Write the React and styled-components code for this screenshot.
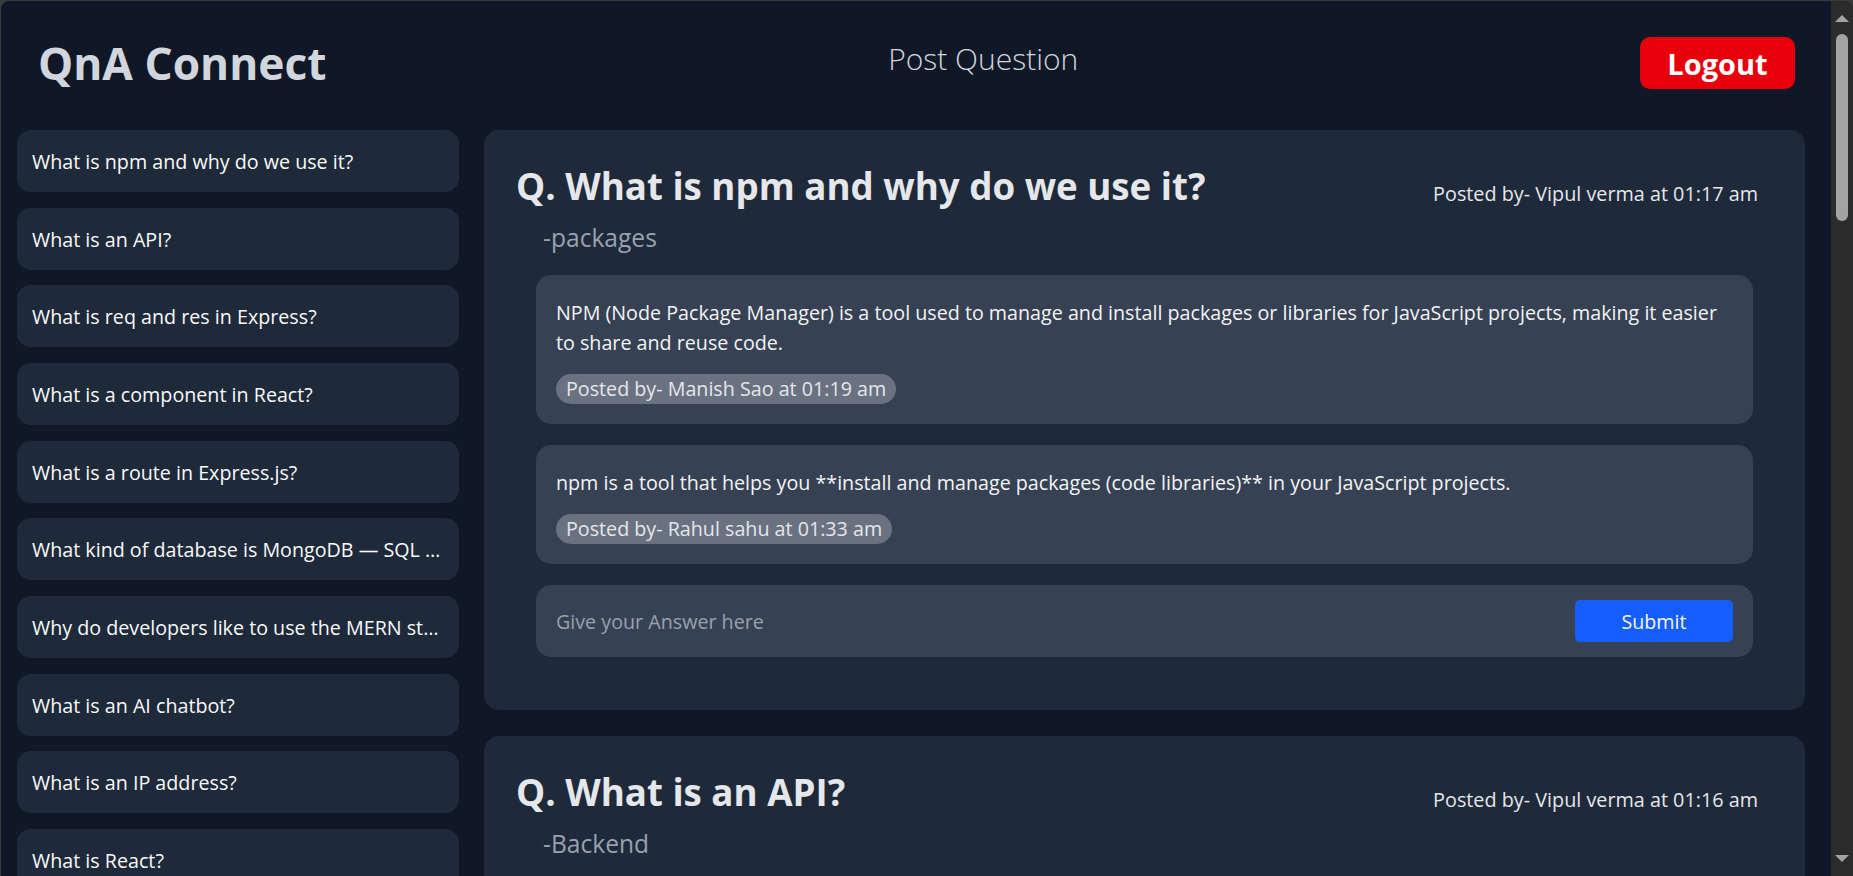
import React from "react";
import styled, { createGlobalStyle } from "styled-components";

const GlobalStyle = createGlobalStyle`
  html, body {
    margin: 0;
    padding: 0;
    height: 100%;
    overflow: hidden;
    background: #3b3b3b;
  }
  #root { height: 100%; }
  *, *::before, *::after { box-sizing: border-box; }
`;

const Frame = styled.div`
  height: calc(100vh - 1px);
  margin: 1px 0 0 1px;
  border-top-left-radius: 8px;
  border-top-right-radius: 8px;
  overflow: hidden;
  display: flex;
  background: #101828;
  font-family: "Open Sans", "Noto Sans", sans-serif;
`;

const Viewport = styled.div`
  flex: 1;
  min-width: 0;
  height: 100%;
  overflow-y: auto;
  scrollbar-width: none;
  &::-webkit-scrollbar {
    display: none;
  }
`;

const ScrollTrack = styled.div`
  width: 22px;
  flex-shrink: 0;
  height: 100%;
  background: #2c2c2c;
  display: flex;
  flex-direction: column;
  align-items: center;
`;

const ScrollArrow = styled.div`
  height: 29px;
  width: 100%;
  display: flex;
  justify-content: center;
  align-items: ${(p) => (p.$down ? "flex-end" : "flex-start")};
  padding: ${(p) => (p.$down ? "0 0 14px" : "14px 0 0")};
  margin-top: ${(p) => (p.$down ? "auto" : "0")};
  &::before {
    content: "";
    width: 0;
    height: 0;
    border-left: 7px solid transparent;
    border-right: 7px solid transparent;
    ${(p) =>
      p.$down
        ? "border-top: 7px solid #a3a3a3;"
        : "border-bottom: 7px solid #a3a3a3;"}
  }
`;

const ScrollThumb = styled.div`
  width: 12px;
  height: 187px;
  margin-top: 4px;
  border-radius: 6px;
  background: #a3a3a3;
`;

const Header = styled.header`
  height: 129px;
  display: flex;
  align-items: center;
  justify-content: space-between;
  padding: 0 36px 5px 37px;
`;

const Logo = styled.h1`
  margin: 0;
  font-size: 44.3px;
  font-weight: 700;
  color: #d1d5dc;
  line-height: 52px;
`;

const NavLink = styled.a`
  font-size: 30px;
  font-weight: 300;
  color: #d1d5dc;
  text-decoration: none;
  line-height: 40px;
  margin-top: -8px;
  cursor: pointer;
`;

const LogoutButton = styled.button`
  width: 155px;
  height: 52px;
  border: none;
  border-radius: 10px;
  background: #e7000b;
  color: #ffffff;
  font-family: inherit;
  font-size: 29px;
  font-weight: 700;
  cursor: pointer;
`;

const Body = styled.div`
  display: flex;
  align-items: flex-start;
  gap: 25px;
  padding: 0 26px 26px 16px;
`;

const Sidebar = styled.aside`
  width: 442px;
  flex-shrink: 0;
  display: flex;
  flex-direction: column;
  gap: 15.67px;
`;

const SideItem = styled.div`
  height: 62px;
  padding: 17px 15px 15px;
  background: #1e2939;
  border-radius: 14px;
  color: #f9fafb;
  font-size: 19.7px;
  line-height: 30px;
  white-space: nowrap;
  overflow: hidden;
  text-overflow: ellipsis;
  cursor: pointer;
`;

const Feed = styled.main`
  flex: 1;
  min-width: 0;
  display: flex;
  flex-direction: column;
  gap: 26px;
`;

const Card = styled.article`
  background: #1e2939;
  border-radius: 15px;
  padding: 33.5px 30px 53px 32px;
`;

const QuestionHead = styled.div`
  display: flex;
  align-items: baseline;
  justify-content: space-between;
  padding-right: 17px;
`;

const QuestionTitle = styled.h2`
  margin: 0;
  font-size: 36.7px;
  line-height: 45px;
  font-weight: 700;
  color: #e5e7eb;
`;

const PostedBy = styled.span`
  font-size: 19.8px;
  line-height: 30px;
  color: #e5e7eb;
  white-space: nowrap;
  position: relative;
  top: 1px;
`;

const Tag = styled.div`
  margin-top: 11.5px;
  padding-left: 27px;
  font-size: 24.6px;
  line-height: 35px;
  color: #99a1af;
`;

const Answers = styled.div`
  margin: 20px 22px 0 20px;
  display: flex;
  flex-direction: column;
  gap: 21px;
`;

const AnswerBox = styled.div`
  background: #364153;
  border-radius: 15px;
  padding: 22.5px 20px 20px;
`;

const AnswerText = styled.p`
  margin: 0;
  font-size: 19.7px;
  line-height: 30px;
  color: #f3f4f6;
`;

const Badge = styled.span`
  display: inline-block;
  margin-top: 16.5px;
  padding: 0 10px;
  background: #6a7282;
  border-radius: 15px;
  font-size: 19.7px;
  line-height: 30px;
  color: #e5e7eb;
`;

const AnswerForm = styled.form`
  display: flex;
  align-items: center;
  gap: 16px;
  background: #364153;
  border-radius: 15px;
  padding: 15px 20px;
`;

const AnswerInput = styled.input`
  flex: 1;
  min-width: 0;
  border: none;
  outline: none;
  background: transparent;
  padding: 1px 0 0;
  font-family: inherit;
  font-size: 19.7px;
  line-height: 30px;
  color: #f3f4f6;
  &::placeholder {
    color: #99a1af;
  }
`;

const SubmitButton = styled.button`
  width: 158px;
  height: 42px;
  border: none;
  border-radius: 5px;
  background: #155dfc;
  color: #f3f4f6;
  font-family: inherit;
  font-size: 19.7px;
  cursor: pointer;
`;

const questions = [
  {
    title: "What is npm and why do we use it?",
    tag: "packages",
    author: "Vipul verma",
    time: "01:17 am",
    answers: [
      {
        text: "NPM (Node Package Manager) is a tool used to manage and install packages or libraries for JavaScript projects, making it easier to share and reuse code.",
        author: "Manish Sao",
        time: "01:19 am",
      },
      {
        text: "npm is a tool that helps you **install and manage packages (code libraries)** in your JavaScript projects.",
        author: "Rahul sahu",
        time: "01:33 am",
      },
    ],
  },
  {
    title: "What is an API?",
    tag: "Backend",
    author: "Vipul verma",
    time: "01:16 am",
    answers: [
      {
        text: "An API (Application Programming Interface) lets two programs talk to each other by sending requests and receiving responses.",
        author: "Manish Sao",
        time: "01:20 am",
      },
    ],
  },
  { title: "What is req and res in Express?", tag: "Express", author: "Rahul sahu", time: "01:12 am", answers: [] },
  { title: "What is a component in React?", tag: "React", author: "Manish Sao", time: "01:10 am", answers: [] },
  { title: "What is a route in Express.js?", tag: "Express", author: "Vipul verma", time: "01:08 am", answers: [] },
  {
    title: "What kind of database is MongoDB — SQL or NoSQL?",
    tag: "Database",
    author: "Rahul sahu",
    time: "01:05 am",
    answers: [
      {
        text: "MongoDB is a NoSQL database that stores data as flexible, JSON-like documents.",
        author: "Vipul verma",
        time: "01:07 am",
      },
    ],
  },
  {
    title: "Why do developers like to use the MERN stack for web apps?",
    tag: "MERN",
    author: "Manish Sao",
    time: "01:02 am",
    answers: [],
  },
  { title: "What is an AI chatbot?", tag: "AI", author: "Vipul verma", time: "12:58 am", answers: [] },
  { title: "What is an IP address?", tag: "Networking", author: "Rahul sahu", time: "12:55 am", answers: [] },
  { title: "What is React?", tag: "Frontend", author: "Manish Sao", time: "12:50 am", answers: [] },
];

const sideList = [
  ...questions.map((q) => q.title),
  "What is Node.js?",
  "What is JSX?",
];

function QuestionCard({ q }) {
  return (
    <Card>
      <QuestionHead>
        <QuestionTitle>Q. {q.title}</QuestionTitle>
        <PostedBy>
          Posted by- {q.author} at {q.time}
        </PostedBy>
      </QuestionHead>
      <Tag>-{q.tag}</Tag>
      <Answers>
        {q.answers.map((a, i) => (
          <AnswerBox key={i}>
            <AnswerText>{a.text}</AnswerText>
            <Badge>
              Posted by- {a.author} at {a.time}
            </Badge>
          </AnswerBox>
        ))}
        <AnswerForm onSubmit={(e) => e.preventDefault()}>
          <AnswerInput placeholder="Give your Answer here" />
          <SubmitButton type="submit">Submit</SubmitButton>
        </AnswerForm>
      </Answers>
    </Card>
  );
}

export default function App() {
  return (
    <>
      <GlobalStyle />
      <Frame>
        <Viewport>
          <Header>
            <Logo>QnA Connect</Logo>
            <NavLink>Post Question</NavLink>
            <LogoutButton>Logout</LogoutButton>
          </Header>
          <Body>
            <Sidebar>
              {sideList.map((t) => (
                <SideItem key={t}>{t}</SideItem>
              ))}
            </Sidebar>
            <Feed>
              {questions.map((q) => (
                <QuestionCard key={q.title} q={q} />
              ))}
            </Feed>
          </Body>
        </Viewport>
        <ScrollTrack aria-hidden="true">
          <ScrollArrow />
          <ScrollThumb />
          <ScrollArrow $down />
        </ScrollTrack>
      </Frame>
    </>
  );
}
